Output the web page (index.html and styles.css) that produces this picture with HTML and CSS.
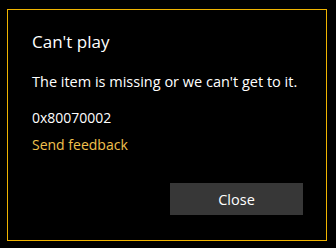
FILE: index.html
```html
<!DOCTYPE html>
<html>
<head>
<meta charset="utf-8">
<link rel="stylesheet" href="styles.css">
</head>
<body>
<div class="dialog">
  <div class="title">Can't play</div>
  <div class="message">The item is missing or we can't get to it.</div>
  <div class="code">0x80070002</div>
  <a class="feedback">Send feedback</a>
  <div class="actions">
    <button class="close">Close</button>
  </div>
</div>
</body>
</html>
```

FILE: styles.css
```css
html, body {
  margin: 0;
  padding: 0;
  background: #000;
}
body {
  width: 336px;
  height: 248px;
  overflow: hidden;
  font-family: "Open Sans", "Noto Sans", sans-serif;
  color: #fff;
}
.dialog {
  box-sizing: border-box;
  margin: 9px 0 0 7px;
  width: 320px;
  height: 232px;
  border: 1px solid #f0b400;
  padding: 20px 23px 0 24px;
  display: flex;
  flex-direction: column;
}
.title {
  font-size: 17px;
  line-height: 24px;
  height: 24px;
}
.message {
  margin-top: 18px;
  font-size: 14.5px;
  line-height: 20px;
}
.code {
  margin-top: 16px;
  font-size: 14px;
  line-height: 20px;
}
.feedback {
  margin-top: 7px;
  font-size: 14px;
  line-height: 20px;
  color: #f2c14e;
}
.actions {
  display: flex;
  justify-content: flex-end;
  margin-top: 28px;
}
.close {
  width: 133px;
  height: 32px;
  border: 0;
  background: #373737;
  color: #fff;
  font-family: inherit;
  font-size: 14.5px;
  padding: 0;
}
```
